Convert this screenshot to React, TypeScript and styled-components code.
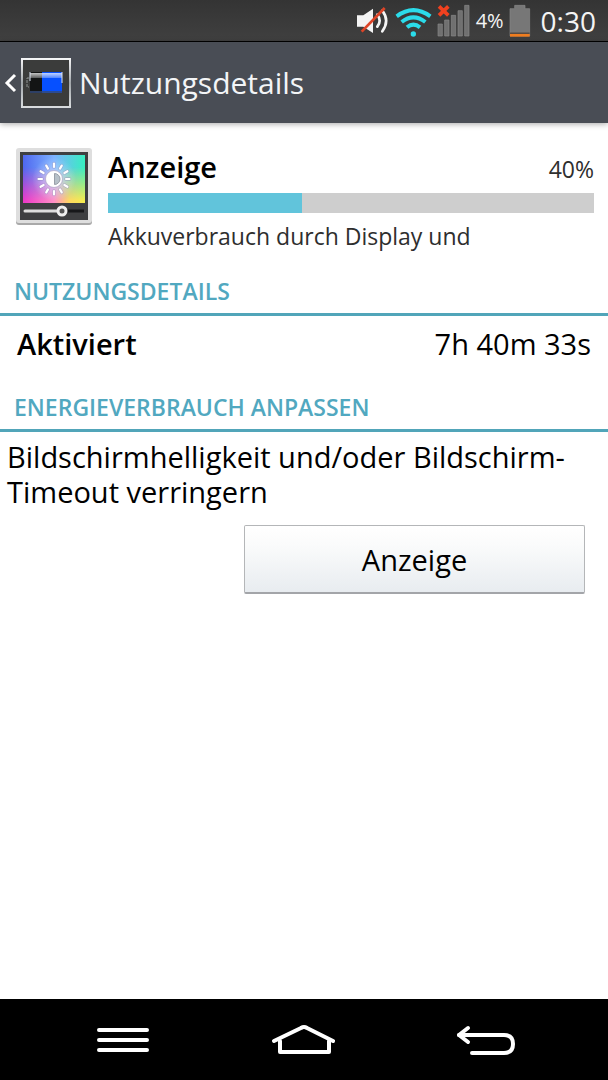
import React from "react";
import styled, { createGlobalStyle } from "styled-components";

const GlobalStyle = createGlobalStyle`
  * { box-sizing: border-box; }
  body { margin: 0; background: #fff; }
  h1, h2, p, dl, dt, dd { margin: 0; font-weight: 400; }
  button { font-family: inherit; }
  svg { display: block; flex: none; }
`;

const Screen = styled.div`
  display: flex;
  flex-direction: column;
  min-height: 100vh;
  font-family: "Open Sans", "Noto Sans", sans-serif;
  color: #000;
`;

const StatusBar = styled.div`
  display: flex;
  align-items: center;
  justify-content: flex-end;
  gap: 5px;
  height: 42px;
  padding-right: 12px;
  background: linear-gradient(#343434, #404040);
  border-bottom: 1px solid #000;
  color: #f4f4f4;
`;

const StatusText = styled.span<{ $large?: boolean }>`
  font-size: ${(p) => (p.$large ? 28 : 20)}px;
  line-height: 36px;
  margin-left: ${(p) => (p.$large ? 5 : 0)}px;
`;

const Header = styled.header`
  position: relative;
  display: flex;
  align-items: center;
  gap: 8px;
  height: 81px;
  padding: 0 4px;
  background: #494d55;
  box-shadow: 0 1px 6px rgba(0, 0, 0, 0.35);
  color: #f3f5f7;
`;

const BackButton = styled.button`
  display: flex;
  align-items: center;
  gap: 4px;
  padding: 0;
  border: 0;
  background: none;
`;

const Title = styled.h1`
  font-size: 30px;
  line-height: 36px;
`;

const Content = styled.main`
  flex: 1;
`;

const Summary = styled.section`
  display: flex;
  gap: 15px;
  padding: 25px 14px 6px 15px;
`;

const SummaryBody = styled.div`
  display: flex;
  flex: 1;
  flex-direction: column;
  gap: 9px;
  min-width: 0;
`;

const SummaryTop = styled.div`
  display: flex;
  align-items: baseline;
  justify-content: space-between;
  height: 36px;
  line-height: 38px;
`;

const Name = styled.h2`
  font-size: 29px;
  font-weight: 600;
`;

const Small = styled.span`
  font-size: 23px;
  color: #2e2e2e;
`;

const Bar = styled.div`
  height: 20px;
  background: #cecece;
`;

const BarFill = styled.div`
  height: 100%;
  background: #61c4db;
`;

const Description = styled.p`
  font-size: 23px;
  line-height: 28px;
  color: #2e2e2e;
`;

const SectionTitle = styled.h2`
  padding: 23px 14px 10px;
  border-bottom: 3px solid #51a5b9;
  font-size: 23px;
  font-weight: 600;
  line-height: 24px;
  color: #51a8c0;
`;

const Row = styled.dl`
  display: flex;
  justify-content: space-between;
  padding: 10px 17px;
  font-size: 29px;
  line-height: 36px;
`;

const Label = styled.dt`
  && { font-weight: 600; }
`;

const Hint = styled.p`
  padding: 7px 7px 16px;
  font-size: 29px;
  line-height: 35px;
`;

const Actions = styled.div`
  display: flex;
  justify-content: flex-end;
  padding: 0 23px 0 7px;
`;

const ActionButton = styled.button`
  width: 59%;
  height: 69px;
  padding: 0;
  border: 1px solid #b4b6b8;
  border-bottom: 2px solid #a3a5a9;
  border-radius: 2px;
  background: linear-gradient(#fff, #fafbfb 30%, #e8ecf0);
  color: #000;
  font-size: 29px;
`;

const NavBar = styled.nav`
  display: flex;
  align-items: center;
  justify-content: space-between;
  height: 81px;
  padding: 0 92px 0 96px;
  background: #000;
`;

const NavButton = styled.button`
  padding: 0;
  border: 0;
  background: none;
`;

const MutedIcon = () => (
  <svg width="34" height="34" viewBox="0 0 102 102" fill="none">
    <path d="M3 34H22L51 14V87L22 68H3Z" fill="#f4f4f4" />
    <path d="M64 32Q78 50 64 68M79 20Q102 50 79 82" stroke="#f4f4f4" strokeWidth="8" strokeLinecap="round" />
    <path d="M17 83L86 12" stroke="#dd4427" strokeWidth="8" />
  </svg>
);

const WifiIcon = () => (
  <svg width="37" height="34" viewBox="0 0 111 102" fill="none" stroke="#2bdcea" strokeWidth="12">
    <path d="M5 37Q55 0 106 37" />
    <path d="M20 54Q55 26 91 54" />
    <path d="M36 70Q55 54 75 70" />
    <circle cx="55" cy="90" r="8" fill="#2bdcea" stroke="none" />
  </svg>
);

const SignalIcon = () => (
  <svg width="34" height="34" viewBox="0 0 102 102">
    <g fill="#707070" stroke="#8a8a8a" strokeWidth="2">
      <path d="M3 60H16V96H3ZM23 48H36V96H23ZM43 34H56V96H43ZM63 20H76V96H63ZM83 4H96V96H83Z" />
    </g>
    <path d="M6 7L34 34M34 7L6 34" stroke="#f0411f" strokeWidth="11" />
  </svg>
);

const BatteryIcon = () => (
  <svg width="22" height="34" viewBox="0 0 66 102">
    <path d="M17 4H48V14H62V96H3V14H17Z" fill="#777" stroke="#8a8a8a" strokeWidth="2" />
    <path d="M3 90H62V98H3Z" fill="#ef7d20" />
    <path d="M3 86H62V89H3Z" fill="#4b3628" />
  </svg>
);

const ChevronIcon = () => (
  <svg width="13" height="20" viewBox="0 0 13 20" fill="none" stroke="#fff" strokeWidth="3">
    <path d="M11 2L3 10L11 18" />
  </svg>
);

const BatteryAppIcon = () => (
  <svg width="50" height="50" viewBox="0 0 50 50">
    <defs>
      <linearGradient id="frame" x2="0" y2="1" gradientUnits="objectBoundingBox">
        <stop stopColor="#f4f5f6" />
        <stop offset="0.5" stopColor="#a2a7ab" />
        <stop offset="1" stopColor="#d8dbdd" />
      </linearGradient>
      <linearGradient id="shine" x2="0" y2="1">
        <stop stopColor="#fff" stopOpacity="0.75" />
        <stop offset="1" stopColor="#fff" stopOpacity="0.3" />
      </linearGradient>
    </defs>
    <rect x="1" y="1" width="48" height="48" fill="#3b3c3b" stroke="url(#frame)" strokeWidth="2" />
    <path d="M9 14H21V35H9Z" fill="#131515" />
    <path d="M21 14H41V35H21Z" fill="#0650ff" />
    <path d="M9 15H41V20H9Z" fill="url(#shine)" />
    <path d="M9 33H41V35H9Z" fill="#344a78" opacity="0.8" />
    <path d="M9 14V23M41 14V25" stroke="#dbe4f4" />
    <path d="M8 20H6V29H8" fill="none" stroke="#909494" strokeDasharray="3 1" />
  </svg>
);

const rays = Array.from({ length: 12 }, (_, i) => i * 30);

const DisplayIcon = () => (
  <svg width="78" height="80" viewBox="0 0 78 80">
    <defs>
      <linearGradient id="top">
        <stop stopColor="#4f67ef" />
        <stop offset="0.5" stopColor="#7db2ff" />
        <stop offset="1" stopColor="#36efc0" />
      </linearGradient>
      <linearGradient id="bottom">
        <stop stopColor="#ec38c8" />
        <stop offset="0.5" stopColor="#ff8fc6" />
        <stop offset="0.75" stopColor="#ffd960" />
        <stop offset="1" stopColor="#f4ee4e" />
      </linearGradient>
      <linearGradient id="fade" x2="0" y2="1">
        <stop offset="0.25" stopColor="#000" />
        <stop offset="0.95" stopColor="#fff" />
      </linearGradient>
      <mask id="lower">
        <rect x="8" y="7" width="62" height="48" fill="url(#fade)" />
      </mask>
      <radialGradient id="glow">
        <stop stopColor="#fff" stopOpacity="0.5" />
        <stop offset="1" stopColor="#fff" stopOpacity="0" />
      </radialGradient>
    </defs>
    <rect x="1" y="2" width="76" height="75" rx="3" fill="#a9a9a9" />
    <rect x="1" y="0" width="76" height="75" rx="3" fill="#dedede" />
    <rect x="5" y="4" width="68" height="68" fill="#3e3f41" />
    <rect x="8" y="7" width="62" height="48" fill="url(#top)" />
    <rect x="8" y="7" width="62" height="48" fill="url(#bottom)" mask="url(#lower)" />
    <circle cx="39" cy="31" r="22" fill="url(#glow)" />
    <g stroke="#8f86b8" strokeOpacity="0.5" strokeWidth="3.4" strokeLinecap="round">
      {rays.map((a) => (
        <path key={a} d="M39 19V15.500" transform={`rotate(${a} 39 31)`} />
      ))}
    </g>
    <g stroke="#fff" strokeWidth="2.2" strokeLinecap="round">
      {rays.map((a) => (
        <path key={a} d="M39 19V15.500" transform={`rotate(${a} 39 31)`} />
      ))}
    </g>
    <circle cx="39" cy="31" r="8.500" fill="#fff" stroke="#a597bd" strokeOpacity="0.6" />
    <path d="M39.500 25.500A5.500 5.500 0 0 1 39.500 36.500Z" fill="#b6c0c8" stroke="#999fa8" />
    <path d="M10 63H45" stroke="#ddd" strokeWidth="3" strokeLinecap="round" />
    <path d="M50 63H69" stroke="#17181a" strokeWidth="3" />
    <circle cx="47" cy="63" r="4" fill="#555" stroke="#eee" strokeWidth="3" />
  </svg>
);

const MenuIcon = () => (
  <svg width="54" height="30" viewBox="0 0 54 30" stroke="#fff" strokeWidth="4" strokeLinecap="round">
    <path d="M3 5H51M3 15H51M3 25H51" />
  </svg>
);

const HomeIcon = () => (
  <svg width="64" height="32" viewBox="0 0 64 32" fill="none" stroke="#fff" strokeWidth="4" strokeLinecap="round" strokeLinejoin="round">
    <path d="M3 17L30 4Q33 2 36 4L62 17" />
    <path d="M9 17V28H58V17" />
  </svg>
);

const ReturnIcon = () => (
  <svg width="60" height="32" viewBox="0 0 60 32" fill="none" stroke="#fff" strokeWidth="4" strokeLinecap="round" strokeLinejoin="round">
    <path d="M3 11H48Q57 11 57 20Q57 29 48 29H16" />
    <path d="M12 4L3 11L12 18" />
  </svg>
);

const usage = 40;

export default function App() {
  return (
    <Screen>
      <GlobalStyle />
      <StatusBar>
        <MutedIcon />
        <WifiIcon />
        <SignalIcon />
        <StatusText>4%</StatusText>
        <BatteryIcon />
        <StatusText $large>0:30</StatusText>
      </StatusBar>
      <Header>
        <BackButton aria-label="Zurück">
          <ChevronIcon />
          <BatteryAppIcon />
        </BackButton>
        <Title>Nutzungsdetails</Title>
      </Header>
      <Content>
        <Summary>
          <DisplayIcon />
          <SummaryBody>
            <SummaryTop>
              <Name>Anzeige</Name>
              <Small>{usage}%</Small>
            </SummaryTop>
            <Bar role="progressbar" aria-label="Akkuverbrauch" aria-valuenow={usage}>
              <BarFill style={{ width: `${usage}%` }} />
            </Bar>
            <Description>Akkuverbrauch durch Display und</Description>
          </SummaryBody>
        </Summary>
        <SectionTitle>NUTZUNGSDETAILS</SectionTitle>
        <Row>
          <Label>Aktiviert</Label>
          <dd>7h 40m 33s</dd>
        </Row>
        <SectionTitle>ENERGIEVERBRAUCH ANPASSEN</SectionTitle>
        <Hint>Bildschirmhelligkeit und/oder Bildschirm-Timeout verringern</Hint>
        <Actions>
          <ActionButton>Anzeige</ActionButton>
        </Actions>
      </Content>
      <NavBar>
        <NavButton aria-label="Menü"><MenuIcon /></NavButton>
        <NavButton aria-label="Startseite"><HomeIcon /></NavButton>
        <NavButton aria-label="Zurück"><ReturnIcon /></NavButton>
      </NavBar>
    </Screen>
  );
}
